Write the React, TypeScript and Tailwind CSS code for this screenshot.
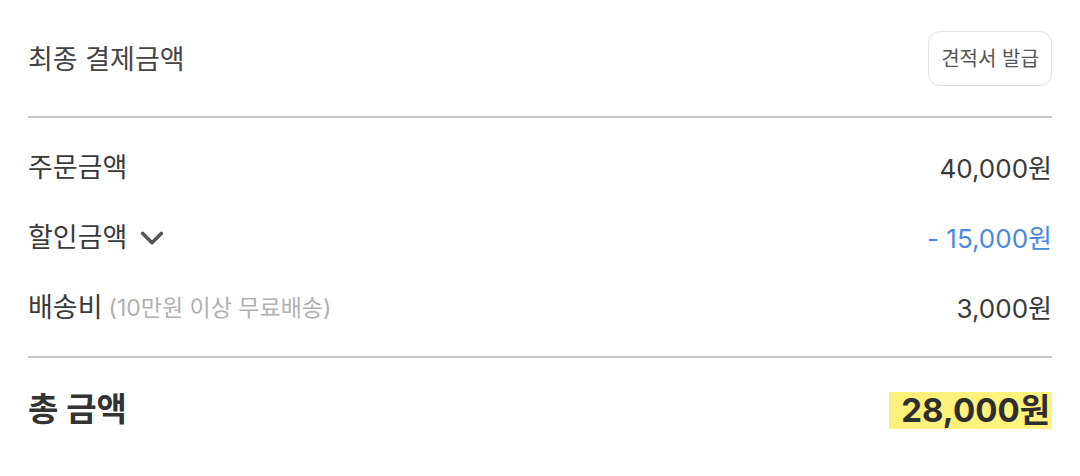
import { ChevronDown } from "lucide-react";

const font = { fontFamily: 'Inter, "Noto Sans CJK KR", sans-serif' };

function Row({ label, sub, value, blue, chevron }: { label: string; sub?: string; value: string; blue?: boolean; chevron?: boolean }) {
    return (
        <div className="flex items-center justify-between h-[70px]">
            <div className="flex items-center">
                <span className="text-[27px] text-[#3a3a3a]">{label}</span>
                {chevron && <ChevronDown size={38} strokeWidth={2.2} className="ml-[6px] text-[#555]" />}
                {sub && <span className="ml-[6px] text-[23px] text-[#b0b0b0]">{sub}</span>}
            </div>
            <span className={`text-[26px] ${blue ? "text-[#4a88dc]" : "text-[#3a3a3a]"}`}>{value}</span>
        </div>
    );
}

export default function App() {
    return (
        <div className="w-[1080px] h-[476px] bg-white px-[28px]" style={font}>
            <div className="flex items-center justify-between pt-[31px] pb-[30px] border-b-2 border-[#c8c8c8]">
                <span className="text-[27px] text-[#444] mt-[4px]">최종 결제금액</span>
                <button className="h-[55px] w-[124px] rounded-[12px] border border-[#e2e2e2] text-[20px] text-[#555]">
                    견적서 발급
                </button>
            </div>
            <div className="pt-[15px] pb-[13px] border-b-2 border-[#c8c8c8]">
                <Row label="주문금액" value="40,000원" />
                <Row label="할인금액" value="- 15,000원" blue chevron />
                <Row label="배송비" sub="(10만원 이상 무료배송)" value="3,000원" />
            </div>
            <div className="flex items-center justify-between h-[104px]">
                <span className="text-[33px] font-bold text-[#333]">총 금액</span>
                <span className="text-[33px] font-bold text-[#2e2e2e] bg-gradient-to-r from-[#fbf07a] to-[#fff47e] pl-[12px] pr-[2px] leading-[37px]">
                    28,000원
                </span>
            </div>
        </div>
    );
}
